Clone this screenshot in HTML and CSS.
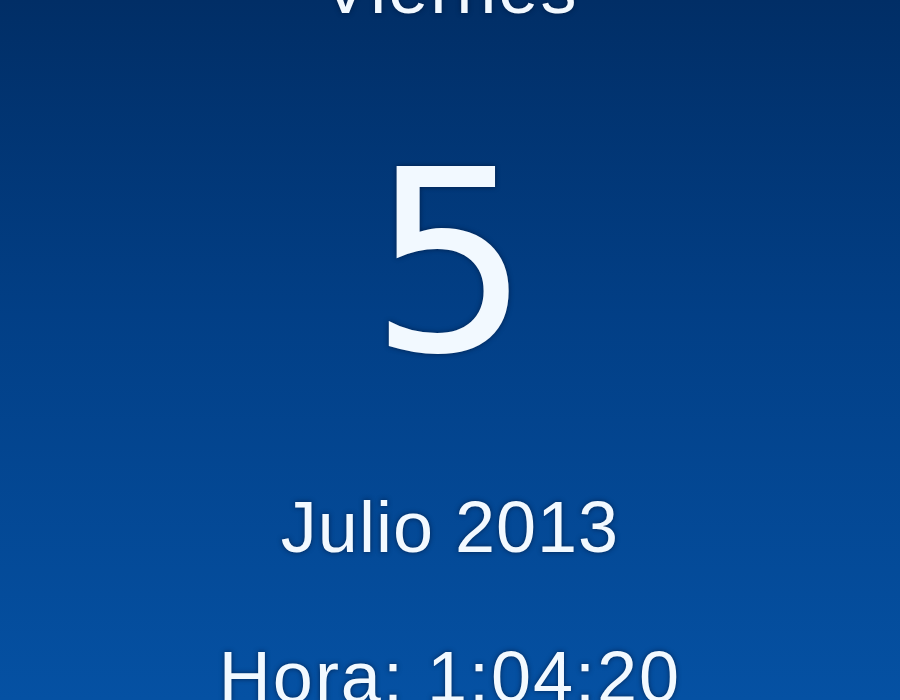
FILE: index.html
```html
<!DOCTYPE html>
<html lang="es">
<head>
<meta charset="utf-8">
<title>Calendario</title>
<link rel="stylesheet" href="styles.css">
</head>
<body>
<main class="gadget">
  <div class="day-name">Viernes</div>
  <div class="day-num">5</div>
  <div class="month">Julio 2013</div>
  <div class="time">Hora: 1:04:20</div>
</main>
</body>
</html>
```
FILE: styles.css
```css
html, body {
  margin: 0;
  padding: 0;
  height: 100%;
}
body {
  width: 900px;
  height: 700px;
  overflow: hidden;
  background: linear-gradient(180deg, #012e66 0%, #023f86 45%, #0551a3 100%);
  font-family: "Liberation Sans", Arial, sans-serif;
  color: #f2f9ff;
}
.gadget {
  display: flex;
  flex-direction: column;
  align-items: center;
}
.gadget div {
  line-height: 1;
  text-shadow: 0 0 5px rgba(0, 18, 50, 0.7);
}
.day-name {
  font-size: 72px;
  margin-top: -48px;
  letter-spacing: 2px;
}
.day-num {
  font-family: "DejaVu Sans", sans-serif;
  font-size: 254px;
  margin-top: 111px;
}
.month {
  font-size: 72px;
  margin-top: 102px;
  letter-spacing: 1px;
}
.time {
  font-size: 72px;
  margin-top: 78px;
  letter-spacing: 2px;
}
```
